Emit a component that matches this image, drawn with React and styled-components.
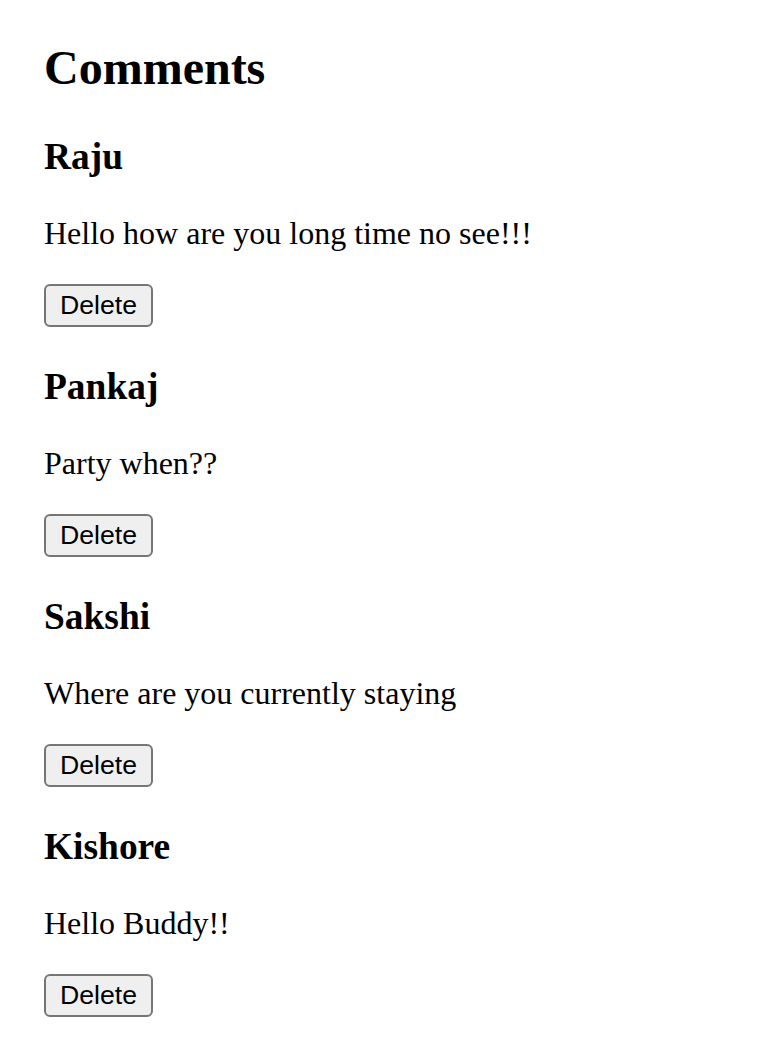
import React, { useState } from "react";
import styled, { createGlobalStyle } from "styled-components";

const GlobalStyle = createGlobalStyle`
  html, body {
    margin: 0;
    padding: 0;
    background: #ffffff;
  }
  body {
    font-family: "Liberation Serif", "Times New Roman", serif;
    color: #000000;
  }
`;

const Page = styled.div`
  padding: 0 44px;
`;

const Title = styled.h2`
  font-size: 48px;
  font-weight: bold;
  margin: 40px 0;
  line-height: normal;
`;

const CommentCard = styled.div`
  display: block;
`;

const Name = styled.h3`
  font-size: 37.44px;
  font-weight: bold;
  margin: 37.44px 0;
  line-height: normal;
`;

const Text = styled.p`
  font-size: 32px;
  margin: 32px 0;
  line-height: normal;
`;

const DeleteButton = styled.button`
  font-family: "Liberation Sans", Arial, Helvetica, sans-serif;
  font-size: 26.67px;
  line-height: normal;
  color: #000000;
  background: #efefef;
  border: 2px solid #767676;
  border-radius: 6px;
  padding: 2px 14px;
  margin: 0;
  height: 43px;
  cursor: pointer;
`;

const initialComments = [
  { id: 1, name: "Raju", text: "Hello how are you long time no see!!!" },
  { id: 2, name: "Pankaj", text: "Party when??" },
  { id: 3, name: "Sakshi", text: "Where are you currently staying" },
  { id: 4, name: "Kishore", text: "Hello Buddy!!" },
];

export default function App() {
  const [comments, setComments] = useState(initialComments);
  return (
    <>
      <GlobalStyle />
      <Page>
        <Title>Comments</Title>
        {comments.map((c) => (
          <CommentCard key={c.id}>
            <Name>{c.name}</Name>
            <Text>{c.text}</Text>
            <DeleteButton
              onClick={() => setComments((list) => list.filter((x) => x.id !== c.id))}
            >
              Delete
            </DeleteButton>
          </CommentCard>
        ))}
      </Page>
    </>
  );
}
